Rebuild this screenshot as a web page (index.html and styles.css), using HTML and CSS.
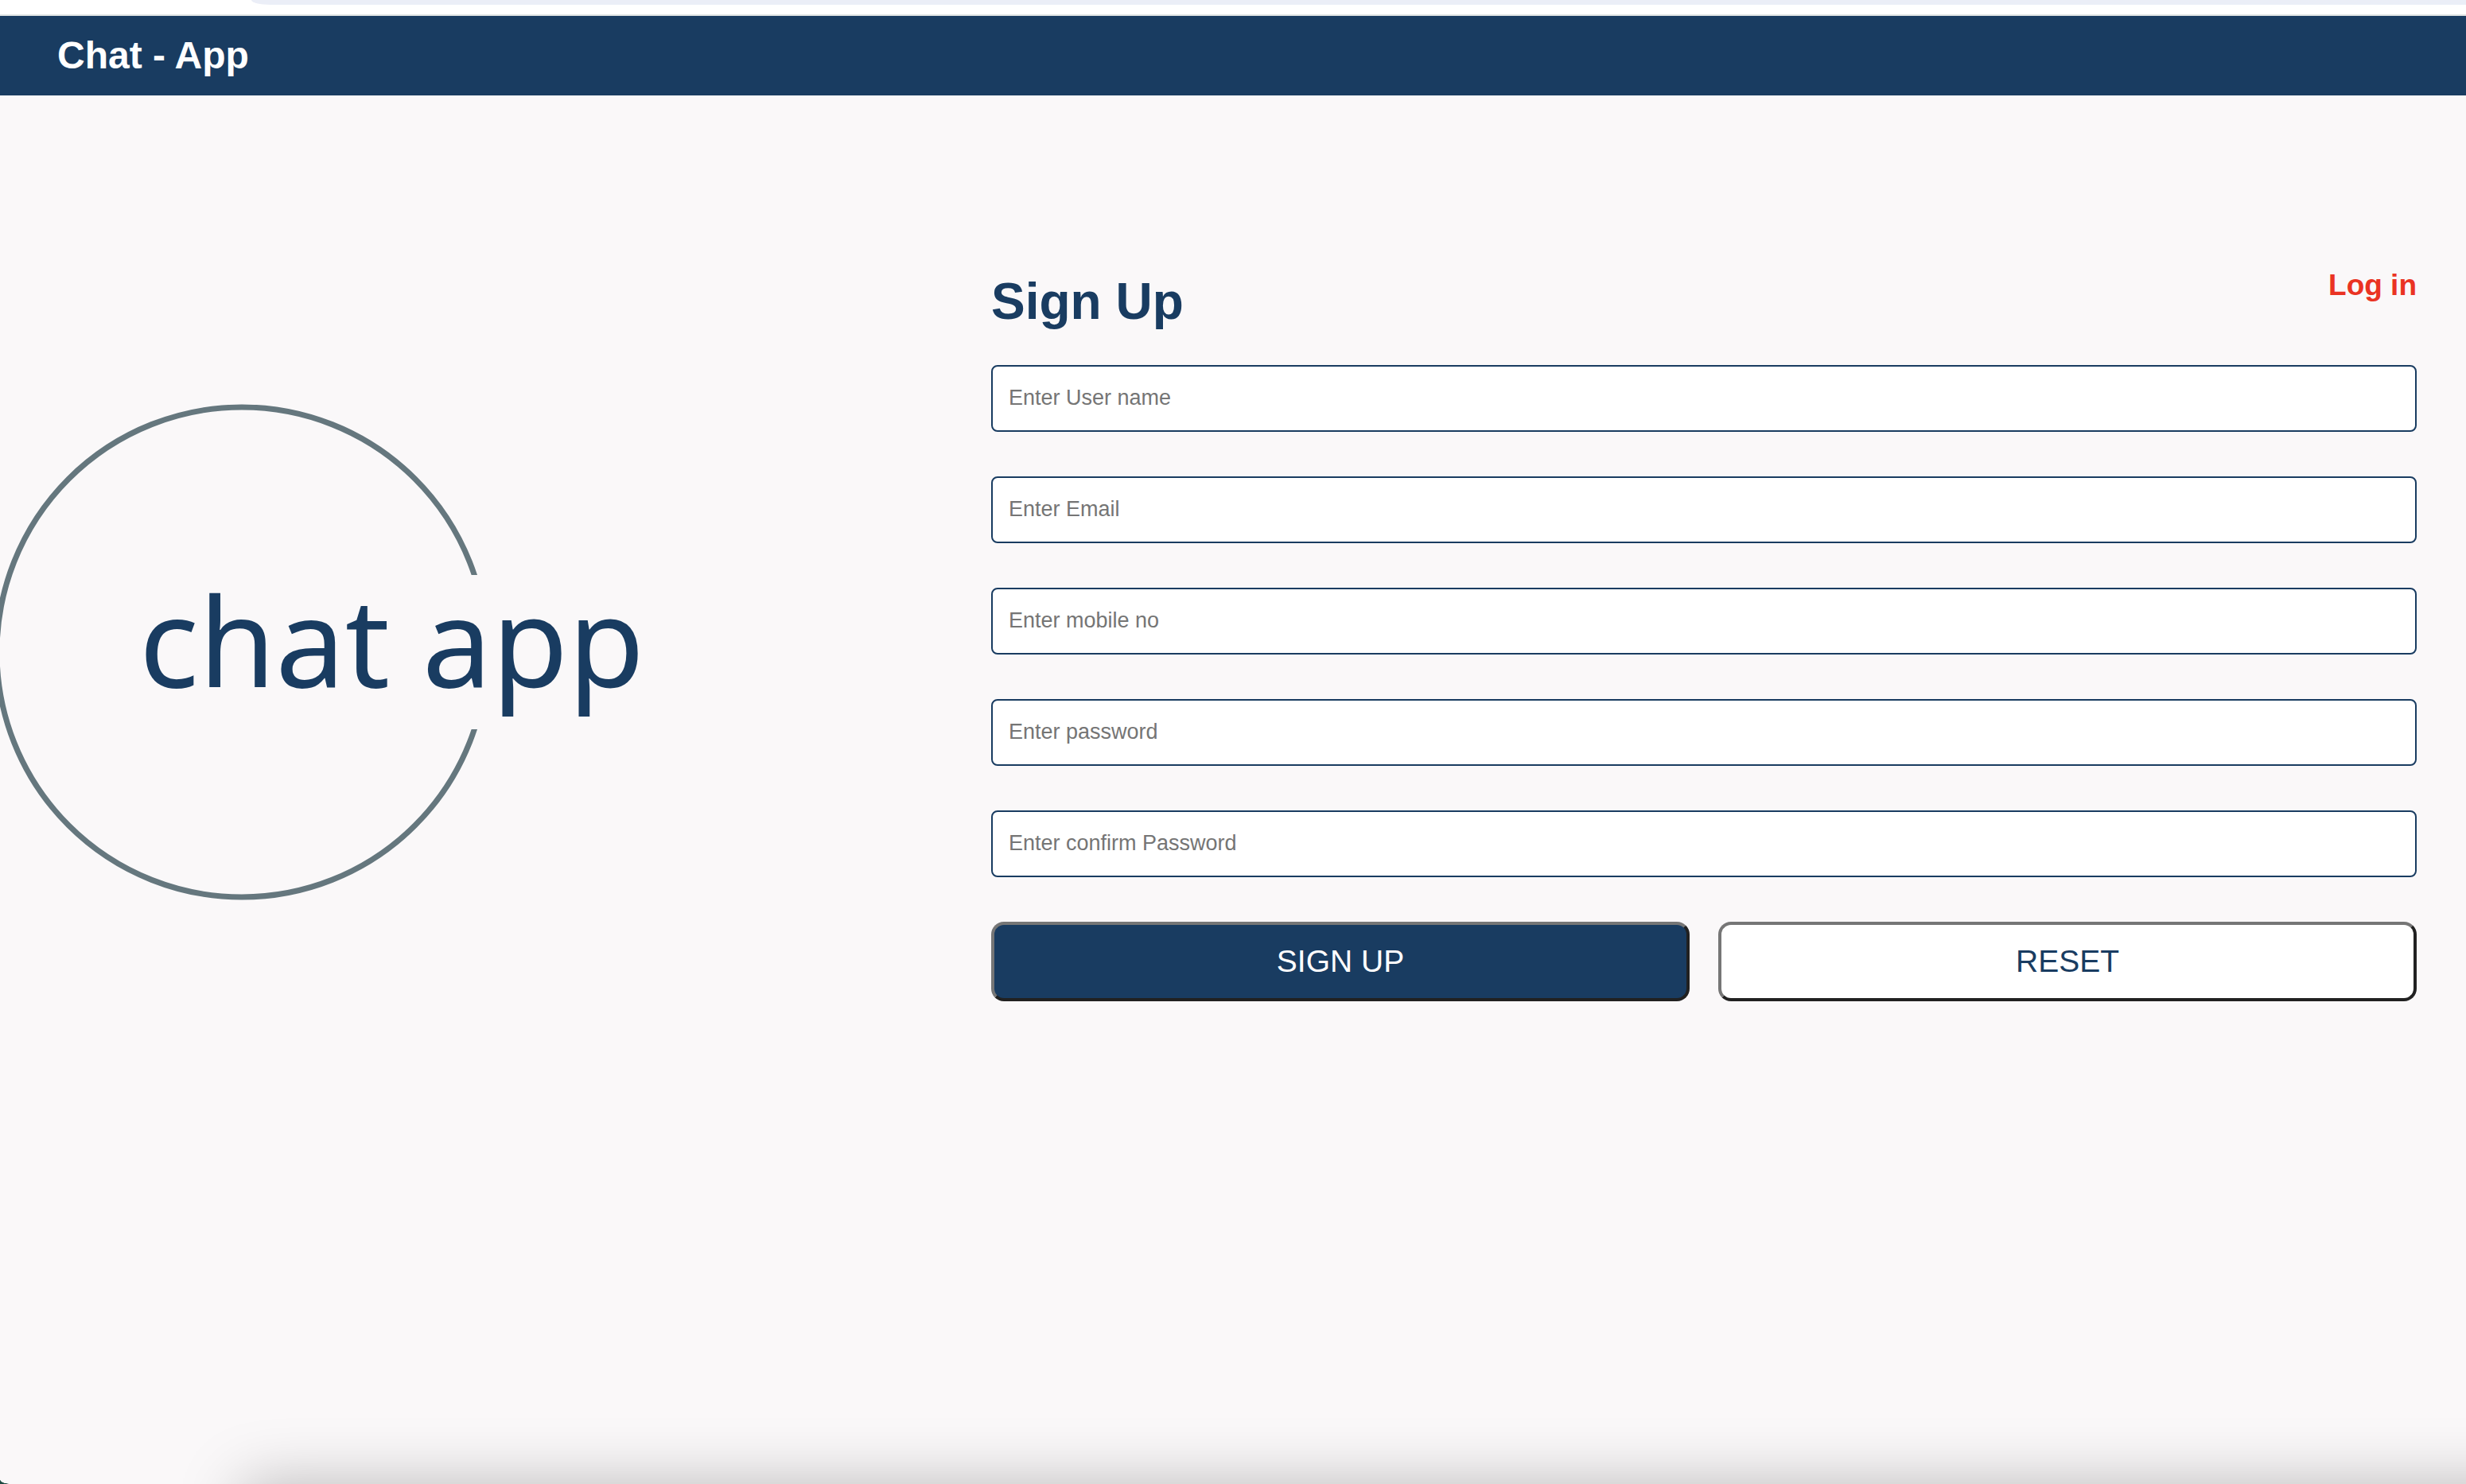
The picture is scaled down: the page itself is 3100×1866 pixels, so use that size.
FILE: index.html
```html
<!DOCTYPE html>
<html lang="en">
<head>
  <meta charset="utf-8">
  <meta name="viewport" content="width=device-width, initial-scale=1">
  <title>Chat - App</title>
  <link rel="stylesheet" href="styles.css">
</head>
<body>
  <div class="toolbar"><div class="toolbar-field"></div></div>
  <header class="site-header">
    <h2 class="brand">Chat - App</h2>
  </header>
  <main class="page">
    <div class="logo-panel">
      <svg class="logo" viewBox="0 0 820 680" role="img" aria-label="chat app">
        <clipPath id="ring-gap">
          <path d="M0 0H820V243H0ZM0 243H300V437H0ZM0 437H820V680H0Z"/>
        </clipPath>
        <circle class="logo-ring" cx="304" cy="340" r="308" clip-path="url(#ring-gap)"/>
        <text class="logo-text" x="175" y="384">chat app</text>
      </svg>
    </div>
    <form class="signup">
      <div class="signup-head">
        <h1 class="title">Sign Up</h1>
        <a class="login" href="#login">Log in</a>
      </div>
      <div class="fields">
        <input class="field" type="text" placeholder="Enter User name" aria-label="Enter User name">
        <input class="field" type="email" placeholder="Enter Email" aria-label="Enter Email">
        <input class="field" type="tel" placeholder="Enter mobile no" aria-label="Enter mobile no">
        <input class="field" type="password" placeholder="Enter password" aria-label="Enter password">
        <input class="field" type="password" placeholder="Enter confirm Password" aria-label="Enter confirm Password">
        <div class="actions">
          <button class="btn btn-primary" type="submit">SIGN UP</button>
          <button class="btn btn-plain" type="reset">RESET</button>
        </div>
      </div>
    </form>
  </main>
  <div class="dock-shadow"></div>
  <div class="window-corner"></div>
</body>
</html>
```
FILE: styles.css
```css
* {
  box-sizing: border-box;
}

body {
  margin: 0;
  min-height: 100vh;
  background: #faf8f9;
  color: #193c61;
  font-family: "Liberation Sans", Arial, Helvetica, sans-serif;
}

.toolbar {
  height: 20px;
  background: #fff;
  border-bottom: 2px solid #e1e5e4;
}

.toolbar-field {
  height: 6px;
  margin-left: 316px;
  background: #ebeef7;
  border-bottom-left-radius: 24px 6px;
}

.site-header {
  display: flex;
  align-items: center;
  padding: 22px 72px;
  background: #193c61;
}

.brand {
  margin: 0;
  color: #fff;
  font-size: 48px;
  line-height: 56px;
}

.page {
  display: grid;
  grid-template-columns: 2fr 3fr;
  align-items: start;
  padding-top: 223px;
}

.logo-panel {
  padding-top: 137px;
}

.logo {
  display: block;
  width: 820px;
  max-width: 100%;
}

.logo-ring {
  fill: none;
  stroke: #65777e;
  stroke-width: 7px;
}

.logo-text {
  fill: #193c61;
  font-family: "Noto Sans", "Open Sans", sans-serif;
  font-size: 156px;
}

.signup {
  padding: 0 62px 0 6px;
}

.signup-head {
  display: flex;
  justify-content: space-between;
  align-items: flex-start;
  margin-bottom: 44px;
}

.title {
  margin: 0;
  font-size: 64px;
  line-height: 72px;
}

.login {
  color: #ea3323;
  font-size: 37px;
  font-weight: bold;
  line-height: 32px;
  text-decoration: none;
}

.fields {
  display: flex;
  flex-direction: column;
  gap: 56px;
}

.field {
  width: 100%;
  height: 84px;
  padding: 0 20px 2px;
  border: 2px solid #193c61;
  border-radius: 8px;
  background: #fff;
  color: #193c61;
  font-family: inherit;
  font-size: 27px;
}

.field::placeholder {
  color: #757575;
}

.actions {
  display: grid;
  grid-template-columns: 1fr 1fr;
  gap: 36px;
}

.btn {
  height: 100px;
  padding: 0;
  border: 4px solid;
  border-color: #767676 #212121 #212121 #767676;
  border-radius: 16px;
  font-family: inherit;
  font-size: 39px;
}

.btn-primary {
  background: #193c61;
  color: #fff;
}

.btn-plain {
  background: #fff;
  color: #193c61;
}

.dock-shadow {
  position: fixed;
  top: 100%;
  left: 305px;
  right: -200px;
  height: 200px;
  box-shadow: 0 0 80px rgba(0, 0, 0, 0.26);
}

.window-corner {
  position: fixed;
  left: 0;
  bottom: 0;
  width: 14px;
  height: 5px;
  background: radial-gradient(ellipse 14px 5px at 100% 0, transparent 92%, #1d4a41 100%);
}
```
